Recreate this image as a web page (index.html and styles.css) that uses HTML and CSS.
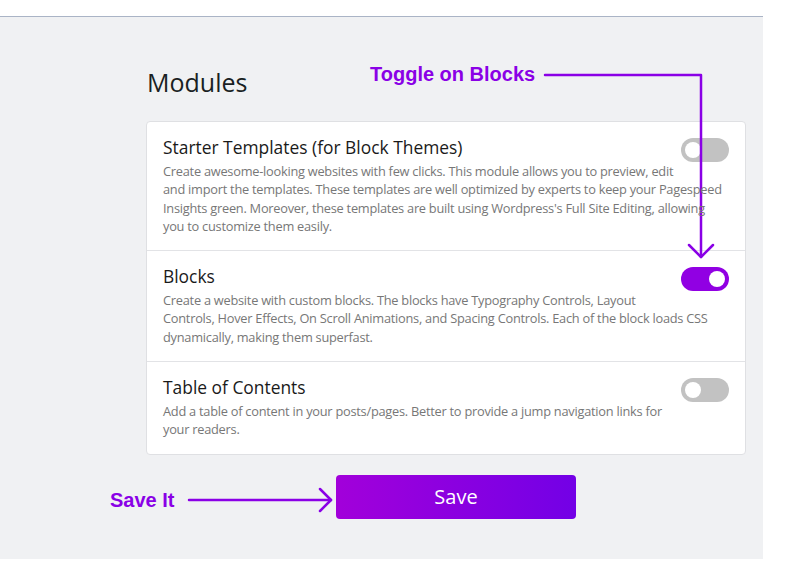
FILE: index.html
```html
<!DOCTYPE html>
<html lang="en">
<head>
<meta charset="utf-8">
<title>Modules</title>
<link rel="stylesheet" href="styles.css">
</head>
<body>
  <div class="topbar"></div>
  <main class="page">
    <div class="content">
      <h1 class="heading">Modules</h1>
      <div class="card">
        <div class="row">
          <div class="info">
            <h2 class="row-title">Starter Templates (for Block Themes)</h2>
            <p class="row-desc">Create awesome-looking websites with few clicks. This module allows you to preview, edit<br>and import the templates. These templates are well optimized by experts to keep your Pagespeed<br>Insights green. Moreover, these templates are built using Wordpress's Full Site Editing, allowing<br>you to customize them easily.</p>
          </div>
          <span class="toggle"><span class="knob"></span></span>
        </div>
        <div class="row">
          <div class="info">
            <h2 class="row-title">Blocks</h2>
            <p class="row-desc">Create a website with custom blocks. The blocks have Typography Controls, Layout<br>Controls, Hover Effects, On Scroll Animations, and Spacing Controls. Each of the block loads CSS<br>dynamically, making them superfast.</p>
          </div>
          <span class="toggle on"><span class="knob"></span></span>
        </div>
        <div class="row">
          <div class="info">
            <h2 class="row-title">Table of Contents</h2>
            <p class="row-desc">Add a table of content in your posts/pages. Better to provide a jump navigation links for<br>your readers.</p>
          </div>
          <span class="toggle"><span class="knob"></span></span>
        </div>
      </div>
      <div class="actions">
        <button class="save" type="button">Save</button>
      </div>
    </div>
  </main>

  <div class="note note-toggle">Toggle on Blocks</div>
  <div class="note note-save">Save It</div>
  <svg class="arrows" width="789" height="569" viewBox="0 0 789 569" fill="none" stroke="#8a00e6" stroke-width="2.5" stroke-linecap="round" stroke-linejoin="round">
    <polyline points="545,75 701,75 701,257"/>
    <polyline points="689,245 701,257 713,245"/>
    <line x1="189" y1="500" x2="331" y2="500"/>
    <polyline points="320,489 331,500 320,511"/>
  </svg>
</body>
</html>
```

FILE: styles.css
```css
* { box-sizing: border-box; }

html, body {
  margin: 0;
  padding: 0;
  background: #ffffff;
}

body {
  position: relative;
  width: 789px;
  height: 569px;
  overflow: hidden;
  font-family: "Open Sans", "Noto Sans", sans-serif;
}

.topbar {
  height: 17px;
  width: 763px;
  border-bottom: 1px solid #aab4c6;
}

.page {
  width: 763px;
  height: 542px;
  background: #f0f1f3;
}

.content {
  padding: 48px 0 0 146px;
  width: 746px;
}

.heading {
  margin: 0 0 22px 1px;
  font-size: 25px;
  line-height: 34px;
  font-weight: 400;
  color: #1a1f23;
}

.card {
  width: 600px;
  background: #ffffff;
  border: 1px solid #dfe0e3;
  border-radius: 4px;
}

.row {
  display: flex;
  justify-content: space-between;
  align-items: flex-start;
  padding: 13px 16px 15px 16px;
  border-top: 1px solid #e2e3e6;
}

.row:first-child { border-top: none; }

.info {
  flex: 1;
  min-width: 0;
  position: relative;
  z-index: 1;
}

.row-title {
  margin: 0 0 3px;
  font-size: 17.4px;
  line-height: 24px;
  font-weight: 400;
  color: #1a1a1a;
}

.row-desc {
  margin: 0;
  font-size: 12.8px;
  line-height: 18.3px;
  color: #777777;
  white-space: nowrap;
  letter-spacing: -0.25px;
}

.toggle {
  flex: none;
  width: 48px;
  height: 24px;
  margin-top: 3px;
  margin-left: -48px;
  border-radius: 12px;
  background: #c2c2c2;
  display: flex;
  align-items: center;
  padding: 0 4px;
}

.toggle .knob {
  width: 16px;
  height: 16px;
  border-radius: 50%;
  background: #ffffff;
}

.toggle.on {
  background: #9100e3;
  justify-content: flex-end;
}

.actions {
  padding: 20px 0 0 190px;
}

.save {
  width: 240px;
  height: 44px;
  border: none;
  border-radius: 4px;
  background: linear-gradient(90deg, #a200da 0%, #7300e6 100%);
  color: #ffffff;
  font-family: "Open Sans", "Noto Sans", sans-serif;
  font-size: 20px;
  line-height: 44px;
  padding: 0;
  cursor: pointer;
}

.note {
  position: absolute;
  font-family: "Liberation Sans", Arial, sans-serif;
  font-weight: 700;
  font-size: 20px;
  line-height: 23px;
  color: #8a00e6;
  white-space: nowrap;
}

.note-toggle { left: 370px; top: 63px; }
.note-save { left: 110px; top: 489px; }

.arrows {
  position: absolute;
  left: 0;
  top: 0;
  pointer-events: none;
}
```
